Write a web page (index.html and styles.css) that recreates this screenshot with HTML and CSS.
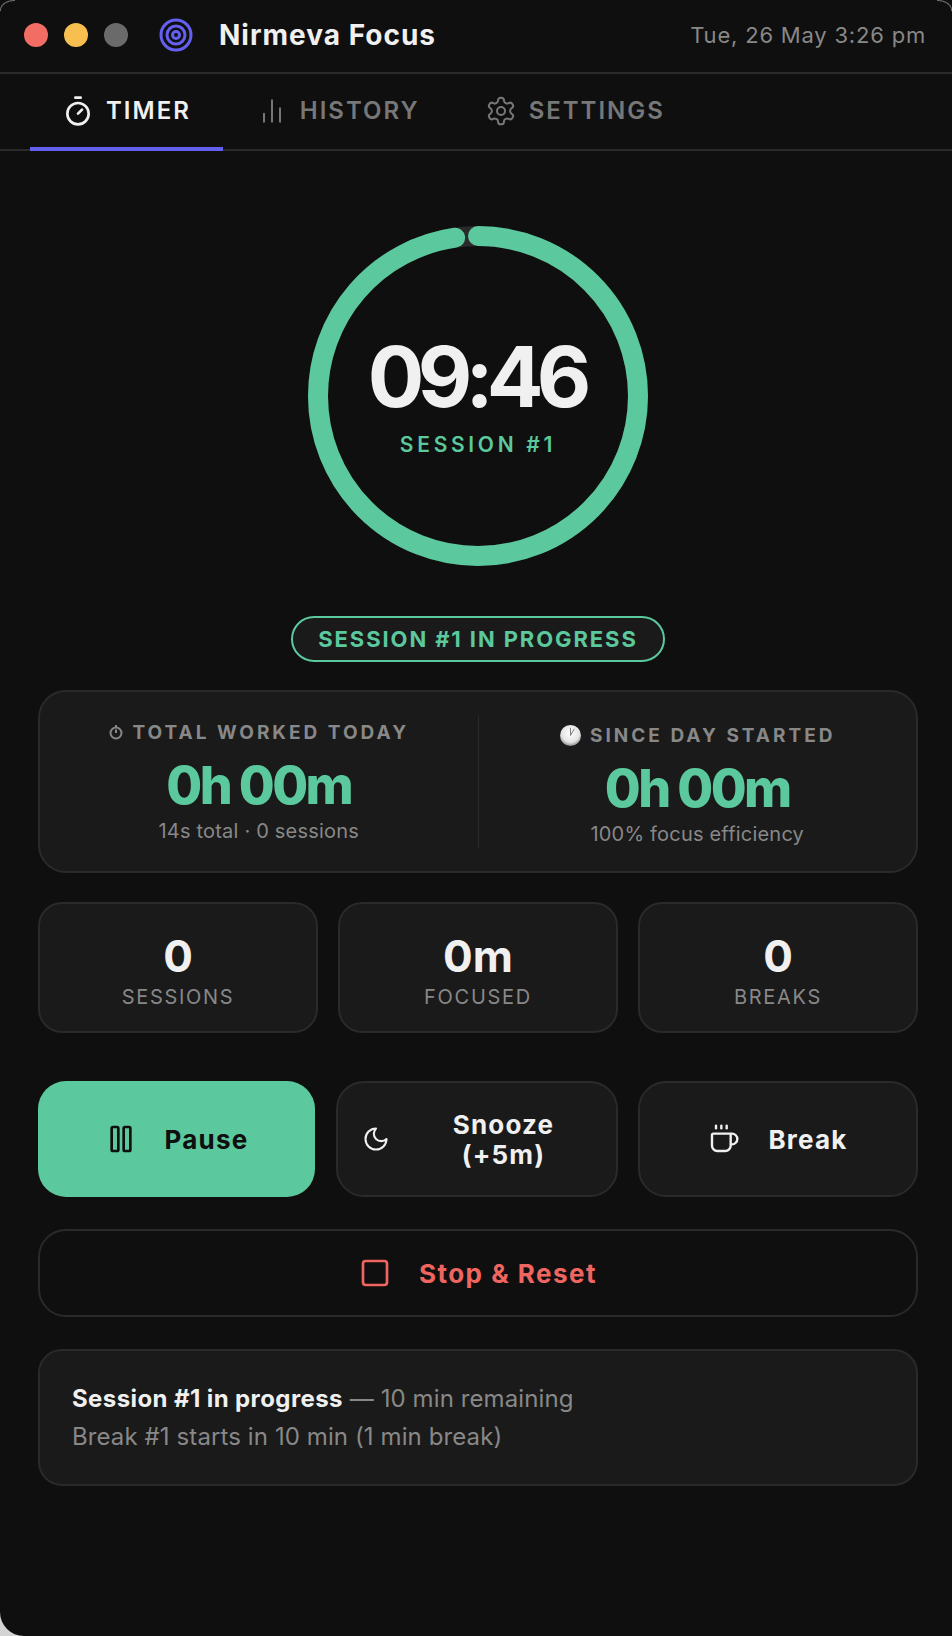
FILE: index.html
```html
<!DOCTYPE html>
<html lang="en">
<head>
    <meta charset="UTF-8">
    <meta name="viewport" content="width=device-width, initial-scale=1.0">
    <title>Nirmeva Focus</title>
    <link rel="stylesheet" href="styles.css">
</head>
<body>
    <div class="app">
        <header class="titlebar">
            <span class="dot dot-red"></span>
            <span class="dot dot-yellow"></span>
            <span class="dot dot-gray"></span>
            <svg class="logo" viewBox="0 0 34 34" fill="none" stroke="#6360f0" stroke-width="3">
                <circle cx="17" cy="17" r="15"></circle>
                <circle cx="17" cy="17" r="9"></circle>
                <circle cx="17" cy="17" r="3.5"></circle>
            </svg>
            <span class="app-name">Nirmeva Focus</span>
            <span class="clock">Tue, 26 May 3:26 pm</span>
        </header>

        <nav class="tabs">
            <a class="tab active">
                <svg class="icon" viewBox="0 0 24 24" stroke-width="2"><line x1="10" y1="2" x2="14" y2="2"></line><line x1="12" y1="14" x2="15" y2="11"></line><circle cx="12" cy="14" r="8"></circle></svg>
                TIMER
            </a>
            <a class="tab">
                <svg class="icon" viewBox="0 0 24 24" stroke-width="1.5"><line x1="18" y1="20" x2="18" y2="10"></line><line x1="12" y1="20" x2="12" y2="4"></line><line x1="6" y1="20" x2="6" y2="14"></line></svg>
                HISTORY
            </a>
            <a class="tab">
                <svg class="icon" viewBox="0 0 24 24" stroke-width="1.5"><path d="M12.22 2h-.44a2 2 0 0 0-2 2v.18a2 2 0 0 1-1 1.73l-.43.25a2 2 0 0 1-2 0l-.15-.08a2 2 0 0 0-2.73.73l-.22.38a2 2 0 0 0 .73 2.73l.15.1a2 2 0 0 1 1 1.72v.51a2 2 0 0 1-1 1.74l-.15.09a2 2 0 0 0-.73 2.73l.22.38a2 2 0 0 0 2.73.73l.15-.08a2 2 0 0 1 2 0l.43.25a2 2 0 0 1 1 1.73V20a2 2 0 0 0 2 2h.44a2 2 0 0 0 2-2v-.18a2 2 0 0 1 1-1.73l.43-.25a2 2 0 0 1 2 0l.15.08a2 2 0 0 0 2.73-.73l.22-.39a2 2 0 0 0-.73-2.73l-.15-.08a2 2 0 0 1-1-1.74v-.5a2 2 0 0 1 1-1.74l.15-.09a2 2 0 0 0 .73-2.73l-.22-.38a2 2 0 0 0-2.73-.73l-.15.08a2 2 0 0 1-2 0l-.43-.25a2 2 0 0 1-1-1.73V4a2 2 0 0 0-2-2z"></path><circle cx="12" cy="12" r="3"></circle></svg>
                SETTINGS
            </a>
        </nav>

        <main class="content">
            <div class="ring">
                <svg class="ring-svg" viewBox="0 0 340 340">
                    <circle class="ring-track" cx="170" cy="170" r="160"></circle>
                    <circle class="ring-progress" cx="170" cy="170" r="160"></circle>
                </svg>
                <div class="ring-text">
                    <div class="time">09:46</div>
                    <div class="ring-label">SESSION #1</div>
                </div>
            </div>

            <div class="badge">SESSION #1 IN PROGRESS</div>

            <section class="card summary">
                <div class="summary-col">
                    <div class="summary-label">
                        <svg class="mini-watch" viewBox="0 0 16 16"><circle cx="8" cy="9" r="5.5"></circle><line x1="8" y1="1" x2="8" y2="3.5"></line><line x1="8" y1="9" x2="8" y2="5.5"></line></svg>
                        TOTAL WORKED TODAY
                    </div>
                    <div class="summary-value">0h 00m</div>
                    <div class="summary-sub">14s total · 0 sessions</div>
                </div>
                <div class="summary-divider"></div>
                <div class="summary-col summary-col-low">
                    <div class="summary-label">
                        <svg class="mini-clock" viewBox="0 0 24 24">
                            <defs>
                                <radialGradient id="face" cx="50%" cy="40%" r="60%">
                                    <stop offset="0" stop-color="#ffffff"></stop>
                                    <stop offset="0.7" stop-color="#e4e4e4"></stop>
                                    <stop offset="1" stop-color="#8c8c8c"></stop>
                                </radialGradient>
                            </defs>
                            <circle cx="12" cy="12" r="11" fill="url(#face)"></circle>
                            <path d="M12 12V4M12 12l4-7" stroke="#777" stroke-width="1" fill="none"></path>
                        </svg>
                        SINCE DAY STARTED
                    </div>
                    <div class="summary-value">0h 00m</div>
                    <div class="summary-sub">100% focus efficiency</div>
                </div>
            </section>

            <section class="mini-grid">
                <div class="card mini">
                    <div class="mini-value">0</div>
                    <div class="mini-label">SESSIONS</div>
                </div>
                <div class="card mini">
                    <div class="mini-value">0m</div>
                    <div class="mini-label">FOCUSED</div>
                </div>
                <div class="card mini">
                    <div class="mini-value">0</div>
                    <div class="mini-label">BREAKS</div>
                </div>
            </section>

            <section class="actions">
                <button class="btn btn-primary">
                    <svg class="icon" viewBox="0 0 24 24" stroke-width="2"><rect x="14" y="3" width="5" height="18" rx="1"></rect><rect x="5" y="3" width="5" height="18" rx="1"></rect></svg>
                    <span class="btn-text">Pause</span>
                </button>
                <button class="btn btn-snooze">
                    <svg class="icon icon-moon" viewBox="0 0 24 24" stroke-width="1.8"><path d="M12 3a6 6 0 0 0 9 9 9 9 0 1 1-9-9Z"></path></svg>
                    <span class="btn-text">Snooze (+5m)</span>
                </button>
                <button class="btn">
                    <svg class="icon" viewBox="0 0 24 24" stroke-width="1.8"><path d="M10 2v2"></path><path d="M14 2v2"></path><path d="M16 8a1 1 0 0 1 1 1v8a4 4 0 0 1-4 4H7a4 4 0 0 1-4-4V9a1 1 0 0 1 1-1h14a4 4 0 1 1 0 8h-1"></path><path d="M6 2v2"></path></svg>
                    <span class="btn-text">Break</span>
                </button>
            </section>

            <button class="btn btn-stop">
                <svg class="icon" viewBox="0 0 24 24" stroke-width="2"><rect x="3" y="3" width="18" height="18" rx="2"></rect></svg>
                <span class="btn-text">Stop &amp; Reset</span>
            </button>

            <section class="card note">
                <div><strong>Session #1 in progress</strong> — 10 min remaining</div>
                <div>Break #1 starts in 10 min (1 min break)</div>
            </section>
        </main>
    </div>
</body>
</html>
```

FILE: styles.css
```css
* {
    box-sizing: border-box;
}
html, body {
    height: 100%;
}
body {
    margin: 0;
    background: linear-gradient(#d4d4d4, #d4d4d4) left bottom / 24px 24px no-repeat #0f0f0f;
    font-family: Inter, "Liberation Sans", sans-serif;
    color: #f0f0f0;
}
.app {
    position: relative;
    height: 100%;
    background-color: #0f0f0f;
    border-bottom-left-radius: 24px;
    overflow: hidden;
}

/* faint window edge in the two top corners */
.app::before,
.app::after {
    content: "";
    position: absolute;
    top: 0;
    width: 14px;
    height: 10px;
    border-top: 1px solid #6e6e6e;
}
.app::before {
    left: 0;
    border-left: 1px solid #6e6e6e;
    border-top-left-radius: 14px 10px;
}
.app::after {
    right: 0;
    border-right: 1px solid #6e6e6e;
    border-top-right-radius: 14px 10px;
}

/* title bar */
.titlebar {
    display: flex;
    align-items: center;
    height: 74px;
    padding: 0 26px 2px 24px;
    border-bottom: 2px solid #2a2a2a;
}
.dot {
    width: 24px;
    height: 24px;
    margin-right: 16px;
    border-radius: 50%;
}
.dot-red {
    background-color: #f26d63;
}
.dot-yellow {
    background-color: #f6bf4f;
}
.dot-gray {
    background-color: #6a6a6a;
}
.logo {
    width: 34px;
    height: 34px;
    margin-left: 15px;
}
.app-name {
    margin-left: 26px;
    font-size: 28px;
    font-weight: 700;
    letter-spacing: 1px;
}
.clock {
    margin-left: auto;
    font-size: 22px;
    letter-spacing: 0.8px;
    color: #888;
}

/* tabs */
.tabs {
    display: flex;
    gap: 1px;
    height: 77px;
    padding-left: 30px;
    border-bottom: 2px solid #2a2a2a;
}
.tab {
    display: flex;
    align-items: center;
    gap: 12px;
    padding: 0 32px;
    margin-bottom: -2px;
    border-bottom: 4px solid transparent;
    font-size: 24px;
    font-weight: 600;
    letter-spacing: 2px;
    color: #777;
}
.tab.active {
    border-bottom-color: #6360f0;
    color: #f0f0f0;
}
.icon {
    flex: none;
    width: 32px;
    height: 32px;
    fill: none;
    stroke: currentColor;
    stroke-linecap: round;
    stroke-linejoin: round;
}
.icon-moon {
    width: 28px;
    height: 28px;
}

/* main column */
.content {
    display: flex;
    flex-direction: column;
    align-items: center;
    padding: 75px 34px 0 38px;
}
.ring {
    position: relative;
    width: 340px;
    height: 340px;
}
.ring-svg {
    display: block;
    width: 340px;
    height: 340px;
    transform: rotate(-90deg);
}
.ring-track,
.ring-progress {
    fill: none;
    stroke-width: 20;
}
.ring-track {
    stroke: #2a2a2a;
}
.ring-progress {
    stroke: #5bc89d;
    stroke-linecap: round;
    stroke-dasharray: 981.9 1005.3;
}
.ring-text {
    position: absolute;
    inset: 0;
    display: flex;
    flex-direction: column;
    align-items: center;
    justify-content: center;
}
.time {
    margin-right: 3.5px;
    font-size: 84px;
    font-weight: 700;
    line-height: 1;
    letter-spacing: -6.75px;
}
.ring-label {
    margin-top: 13px;
    font-size: 21px;
    font-weight: 600;
    letter-spacing: 3.7px;
    color: #5bc89d;
}
.badge {
    margin-top: 50px;
    height: 46px;
    padding: 0 25px;
    border: 2px solid #5bc89d;
    border-radius: 23px;
    background-color: #1a1a1a;
    font-size: 22px;
    font-weight: 700;
    line-height: 42px;
    letter-spacing: 1.9px;
    color: #5bc89d;
}

/* cards */
.card {
    background-color: #1a1a1a;
    border: 2px solid #2a2a2a;
}
.summary {
    display: flex;
    align-items: center;
    width: 100%;
    height: 183px;
    margin-top: 28px;
    border-radius: 28px;
}
.summary-col {
    flex: 1;
    text-align: center;
}
.summary-col-low {
    padding-top: 6px;
}
.summary-divider {
    width: 1px;
    height: 132px;
    background-color: #2a2a2a;
}
.summary-label {
    display: flex;
    align-items: center;
    justify-content: center;
    gap: 8px;
    height: 22px;
    font-size: 19px;
    font-weight: 700;
    letter-spacing: 3px;
    color: #888;
}
.mini-watch {
    width: 16px;
    height: 18px;
    fill: none;
    stroke: #888;
    stroke-width: 2;
}
.mini-clock {
    width: 23px;
    height: 23px;
}
.summary-value {
    margin-top: 11px;
    font-size: 52px;
    font-weight: 800;
    line-height: 63px;
    letter-spacing: -2.6px;
    color: #5bc89d;
}
.summary-sub {
    margin-top: 3px;
    font-size: 20px;
    line-height: 22px;
    letter-spacing: 0.2px;
    color: #888;
}
.mini-grid {
    display: grid;
    grid-template-columns: repeat(3, 1fr);
    gap: 20px;
    width: 100%;
    margin-top: 29px;
}
.mini {
    height: 131px;
    padding-top: 26px;
    border-radius: 24px;
    text-align: center;
}
.mini-value {
    font-size: 44px;
    font-weight: 700;
    line-height: 53px;
}
.mini-label {
    margin-top: 2px;
    font-size: 20px;
    letter-spacing: 1.7px;
    color: #888;
}

/* buttons */
.actions {
    display: grid;
    grid-template-columns: 277px 282px 280px;
    gap: 20.5px;
    width: 100%;
    margin-top: 48px;
}
.btn {
    display: flex;
    align-items: center;
    justify-content: center;
    gap: 28px;
    height: 116px;
    padding: 0 28px;
    border: 2px solid #2a2a2a;
    border-radius: 28px;
    background-color: #1a1a1a;
    font-family: inherit;
    font-size: 26px;
    font-weight: 700;
    line-height: 30px;
    letter-spacing: 1.2px;
    color: #f0f0f0;
}
.btn-primary {
    border: none;
    background-color: #5bc89d;
    color: #0f0f0f;
}
.btn-snooze {
    padding: 0 26px 0 24px;
}
.btn-snooze .btn-text {
    flex: 1;
    text-align: center;
}
.btn-text {
    padding-top: 2px;
}
.btn-stop {
    width: 100%;
    height: 88px;
    margin-top: 32px;
    background-color: transparent;
    letter-spacing: 1.5px;
    color: #ef655f;
}
.note {
    width: 100%;
    height: 137px;
    margin-top: 32px;
    padding: 29px 32px;
    border-radius: 24px;
    font-size: 24px;
    line-height: 38px;
    letter-spacing: 0.1px;
    color: #888;
}
.note strong {
    font-weight: 700;
    letter-spacing: 0.4px;
    color: #f0f0f0;
}
```
